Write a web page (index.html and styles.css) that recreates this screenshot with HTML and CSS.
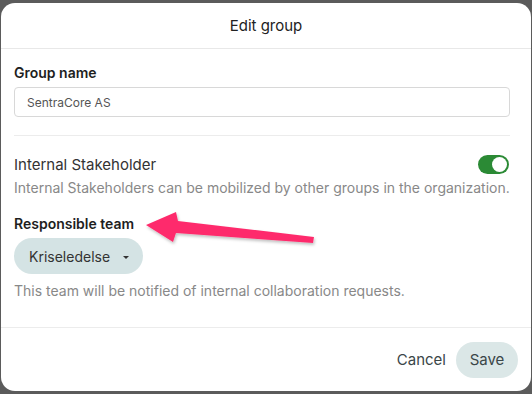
FILE: index.html
```html
<!DOCTYPE html>
<html lang="en">
<head>
  <meta charset="UTF-8" />
  <title>Edit group</title>
  <link rel="stylesheet" href="styles.css">
</head>
<body>
  <div class="dialog">
    <div class="dialog-header">Edit group</div>

    <div class="dialog-body">
      <div class="label">Group name</div>
      <input class="text-input" type="text" value="SentraCore AS">

      <hr class="sep">

      <div class="toggle-row">
        <span class="toggle-label">Internal Stakeholder</span>
        <span class="switch on"><span class="knob"></span></span>
      </div>
      <div class="hint">Internal Stakeholders can be mobilized by other groups in the organization.</div>

      <div class="label team-label">Responsible team</div>
      <button class="chip">Kriseledelse <span class="caret"></span></button>
      <div class="hint team-hint">This team will be notified of internal collaboration requests.</div>
    </div>

    <div class="dialog-footer">
      <button class="btn-text">Cancel</button>
      <button class="btn-save">Save</button>
    </div>
  </div>

  <!-- annotation arrow -->
  <svg class="arrow" width="532" height="394" viewBox="0 0 532 394">
    <defs>
      <filter id="shadow" x="-10%" y="-30%" width="120%" height="160%">
        <feDropShadow dx="1" dy="2" stdDeviation="1.5" flood-color="#000" flood-opacity="0.25"/>
      </filter>
    </defs>
    <path d="M146 225 L176 212 L178 221 L314 237 L313 243 L176 233 L173 242 Z" fill="#fe2c6c" filter="url(#shadow)"/>
  </svg>
</body>
</html>
```

FILE: styles.css
```css
* {
  box-sizing: border-box;
}

body {
  margin: 0;
  height: 394px;
  overflow: hidden;
  background: #5b5b5b;
  font-family: Inter, "Noto Sans", sans-serif;
  color: #2a2a2a;
}

.dialog {
  margin: 3px 1px 0 1px;
  width: 530px;
  height: 388px;
  background: #fff;
  border-radius: 14px;
  display: flex;
  flex-direction: column;
}

.dialog-header {
  height: 46px;
  display: flex;
  align-items: center;
  justify-content: center;
  font-size: 15px;
  color: #222;
  border-bottom: 1px solid #e8e8e8;
}

.dialog-body {
  flex: 1;
  padding: 14px 21px 0 13px;
}

.label {
  font-size: 14px;
  font-weight: 600;
  line-height: 20px;
  color: #1e1e1e;
}

.text-input {
  display: block;
  width: 100%;
  height: 30px;
  margin-top: 4px;
  padding: 0 12px;
  border: 1px solid #d8d8d8;
  border-radius: 4px;
  font-family: inherit;
  font-size: 12px;
  color: #555;
  outline: none;
}

.sep {
  border: none;
  border-top: 1px solid #ececec;
  margin: 18px 0 0;
}

.toggle-row {
  display: flex;
  align-items: center;
  justify-content: space-between;
  margin-top: 17px;
  height: 22px;
}

.toggle-label {
  font-size: 15px;
  color: #333;
}

.switch {
  width: 31px;
  height: 19px;
  border-radius: 10px;
  background: #ccc;
  position: relative;
  margin-right: 1px;
}

.switch.on {
  background: #2b8a35;
}

.knob {
  position: absolute;
  top: 2px;
  right: 2px;
  width: 15px;
  height: 15px;
  border-radius: 50%;
  background: #fff;
}

.hint {
  font-size: 14px;
  line-height: 20px;
  color: #888;
  margin-top: 3px;
  white-space: nowrap;
}

.team-label {
  margin-top: 16px;
}

.chip {
  display: inline-flex;
  align-items: center;
  gap: 13px;
  height: 36px;
  margin-top: 4px;
  padding: 0 14px 0 15px;
  border: none;
  border-radius: 18px;
  background: #d4e3e4;
  font-family: inherit;
  font-size: 14px;
  color: #333;
}

.caret {
  width: 0;
  height: 0;
  border-left: 3.5px solid transparent;
  border-right: 3.5px solid transparent;
  border-top: 3.5px solid #333;
  margin-top: 2px;
}

.team-hint {
  margin-top: 7px;
}

.dialog-footer {
  height: 64px;
  display: flex;
  align-items: center;
  justify-content: flex-end;
  gap: 10px;
  padding-right: 13px;
  border-top: 1px solid #ececec;
}

.btn-text {
  border: none;
  background: none;
  font-family: inherit;
  font-size: 15px;
  color: #3a4648;
  padding: 0;
}

.btn-save {
  height: 36px;
  width: 62px;
  padding: 0;
  border: none;
  border-radius: 18px;
  background: #dbe7e7;
  font-family: inherit;
  font-size: 15px;
  color: #3a4648;
}

.arrow {
  position: absolute;
  top: 0;
  left: 0;
  pointer-events: none;
}
```
